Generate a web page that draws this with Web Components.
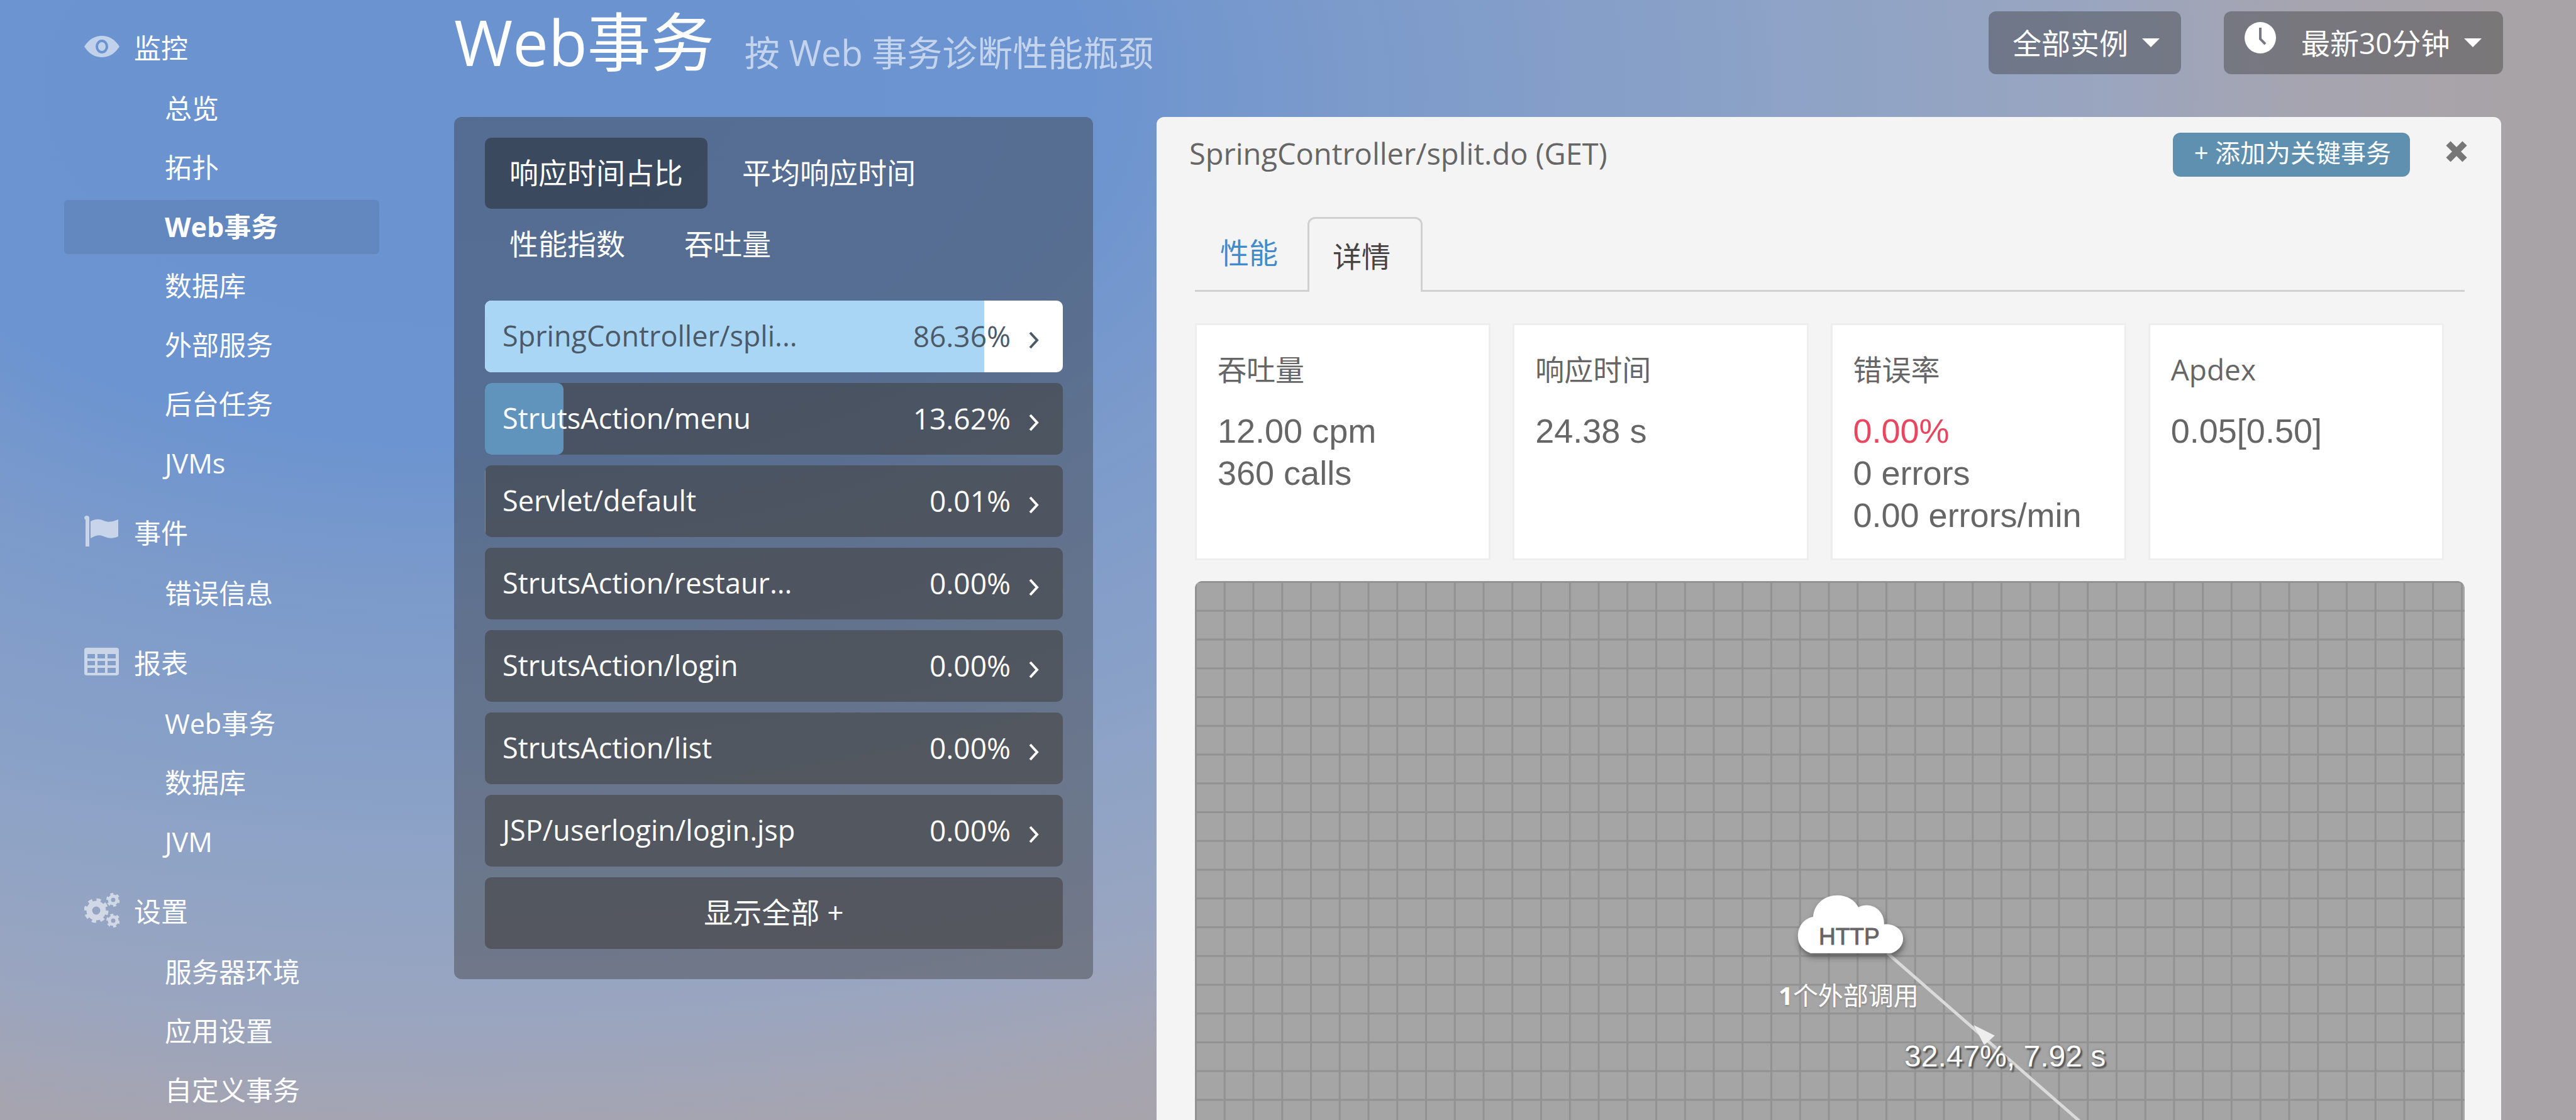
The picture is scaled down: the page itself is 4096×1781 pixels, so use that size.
<!DOCTYPE html>
<html lang="zh-CN">
<head>
<meta charset="utf-8">
<title>Web事务</title>
<style>
  html, body { margin: 0; height: 100%; }
  body {
    overflow: hidden;
    font-family: "Open Sans", "Noto Sans CJK SC", sans-serif;
    font-size: 46px;
    color: #fff;
  }
</style>
</head>
<body>
<apm-app>
  <apm-sidebar slot="side">
    <apm-nav-group icon="eye" label="监控">
      <apm-nav-item>总览</apm-nav-item>
      <apm-nav-item>拓扑</apm-nav-item>
      <apm-nav-item active>Web事务</apm-nav-item>
      <apm-nav-item>数据库</apm-nav-item>
      <apm-nav-item>外部服务</apm-nav-item>
      <apm-nav-item>后台任务</apm-nav-item>
      <apm-nav-item>JVMs</apm-nav-item>
    </apm-nav-group>
    <apm-nav-group icon="flag" label="事件">
      <apm-nav-item>错误信息</apm-nav-item>
    </apm-nav-group>
    <apm-nav-group icon="table" label="报表">
      <apm-nav-item>Web事务</apm-nav-item>
      <apm-nav-item>数据库</apm-nav-item>
      <apm-nav-item>JVM</apm-nav-item>
    </apm-nav-group>
    <apm-nav-group icon="cogs" label="设置">
      <apm-nav-item>服务器环境</apm-nav-item>
      <apm-nav-item>应用设置</apm-nav-item>
      <apm-nav-item>自定义事务</apm-nav-item>
    </apm-nav-group>
  </apm-sidebar>

  <apm-page-header slot="header">
    <span slot="title">Web事务</span>
    <span slot="subtitle">按 Web 事务诊断性能瓶颈</span>
    <apm-dropdown value="全部实例" label="实例"></apm-dropdown>
    <apm-dropdown value="最新30分钟" label="时间范围" clock></apm-dropdown>
  </apm-page-header>

  <apm-transaction-list>
    <apm-metric-tab slot="tabs" active>响应时间占比</apm-metric-tab>
    <apm-metric-tab slot="tabs">平均响应时间</apm-metric-tab>
    <apm-metric-tab slot="tabs">性能指数</apm-metric-tab>
    <apm-metric-tab slot="tabs">吞吐量</apm-metric-tab>
    <apm-transaction share="86.36" active>SpringController/spli...</apm-transaction>
    <apm-transaction share="13.62">StrutsAction/menu</apm-transaction>
    <apm-transaction share="0.01">Servlet/default</apm-transaction>
    <apm-transaction share="0.00">StrutsAction/restaur...</apm-transaction>
    <apm-transaction share="0.00">StrutsAction/login</apm-transaction>
    <apm-transaction share="0.00">StrutsAction/list</apm-transaction>
    <apm-transaction share="0.00">JSP/userlogin/login.jsp</apm-transaction>
  </apm-transaction-list>

  <apm-detail>
    <span slot="name">SpringController/split.do (GET)</span>
    <apm-stat slot="stats" label="吞吐量"><div>12.00 cpm</div><div>360 calls</div></apm-stat>
    <apm-stat slot="stats" label="响应时间"><div>24.38 s</div></apm-stat>
    <apm-stat slot="stats" label="错误率"><div style="color:#e8475f">0.00%</div><div>0 errors</div><div>0.00 errors/min</div></apm-stat>
    <apm-stat slot="stats" label="Apdex"><div>0.05[0.50]</div></apm-stat>
    <apm-topology></apm-topology>
  </apm-detail>
</apm-app>

<script>
const ICONS = {
  eye: `<path fill-rule="evenodd" d="M0 17C8 5 17 0 28 0S48 5 56 17C48 29 39 34 28 34S8 29 0 17ZM28 6a10 11 0 1 0 0 22a10 11 0 1 0 0-22ZM28 10a6 7 0 1 1 0 14a6 7 0 1 1 0-14Z" transform="translate(0 11)"/>`,
  flag: `<path d="M0 7a4 4 0 0 1 8 0V52H2V10ZM10 12C18 8 24 8 31 11S45 13 54 9V36C45 40 38 39 31 36S18 34 10 39Z"/>`,
  table: `<path fill-rule="evenodd" d="M4 6H51a4 4 0 0 1 4 4V46a4 4 0 0 1-4 4H4a4 4 0 0 1-4-4V10A4 4 0 0 1 4 6ZM5 16H17V23H5ZM21 16H33V23H21ZM37 16H50V23H37ZM5 27H17V34H5ZM21 27H33V34H21ZM37 27H50V34H37ZM5 38H17V46H5ZM21 38H33V46H21ZM37 38H50V46H37Z"/>`,
  cogs: `<g fill="none" stroke="currentColor"><circle cx="19" cy="29" r="11" stroke-width="9"/><circle cx="19" cy="29" r="17" stroke-width="5" stroke-dasharray="6.7 6.65"/><circle cx="46" cy="12" r="6" stroke-width="5"/><circle cx="46" cy="12" r="9" stroke-width="4" stroke-dasharray="4.7 4.72"/><circle cx="46" cy="45" r="6" stroke-width="5"/><circle cx="46" cy="45" r="9" stroke-width="4" stroke-dasharray="4.7 4.72"/></g>`
};

function define(name, render) {
  customElements.define(name, class extends HTMLElement {
    constructor() {
      super();
      this.attachShadow({ mode: "open" });
    }
    connectedCallback() {
      this.shadowRoot.innerHTML = render(this);
    }
  });
}

define("apm-app", () => `
<style>
  :host {
    display: grid;
    grid-template-columns: 722px minmax(0, 1fr);
    height: 100vh;
    overflow: hidden;
    background: radial-gradient(ellipse 75% 98% at 18% 8%, #6b93d0 0%, #6c94d0 32%, #7b9acb 45%, #8ea3c6 70%, #9aa5bf 85%, #a5a4b0 95%, #a8a3a7 105%);
  }
  main { display: flex; flex-direction: column; min-height: 0; padding-right: 119px; }
  .body { flex: 1; min-height: 0; display: flex; align-items: flex-start; gap: 101px; }
</style>
<slot name="side"></slot>
<main><slot name="header"></slot><div class="body"><slot></slot></div></main>`);

define("apm-sidebar", () => `
<style>
  :host { display: block; padding: 31px 119px 0 102px; }
  nav { display: flex; flex-direction: column; gap: 22px; }
</style>
<nav><slot></slot></nav>`);

define("apm-nav-group", el => `
<style>
  :host { display: block; font-size: 43px; }
  h2 {
    display: flex; align-items: center; gap: 23px;
    height: 86px; margin: 0 0 13px; padding-left: 32px;
    font-size: inherit; font-weight: 400;
  }
  svg { width: 56px; height: 56px; fill: currentColor; opacity: .58; }
  div { display: flex; flex-direction: column; gap: 8px; }
</style>
<h2><svg viewBox="0 0 56 56" aria-hidden="true">${ICONS[el.getAttribute("icon")]}</svg>${el.getAttribute("label")}</h2>
<div><slot></slot></div>`);

define("apm-nav-item", () => `
<style>
  :host { display: block; }
  a {
    display: block; height: 86px; line-height: 86px; padding-left: 160px;
    color: inherit; text-decoration: none; border-radius: 6px;
  }
  :host([active]) a { background: rgba(0, 0, 0, .08); font-weight: 700; }
</style>
<a href="#"><slot></slot></a>`);

define("apm-page-header", () => `
<style>
  :host { display: flex; align-items: flex-start; height: 168px; padding-top: 18px; }
  h1 { flex: 1; display: flex; align-items: baseline; gap: 48px; margin: 0; font-size: 101px; font-weight: 400; line-height: 96px; }
  small { font-size: 56px; color: rgba(255, 255, 255, .6); }
  .tools { display: flex; gap: 68px; margin-right: -3px; }
</style>
<h1><slot name="title"></slot><small><slot name="subtitle"></slot></small></h1>
<div class="tools"><slot></slot></div>`);

define("apm-dropdown", el => `
<style>
  :host { display: block; }
  label {
    display: flex; align-items: center; height: 100px; padding: 0 34px 0 38px;
    border-radius: 12px; background: rgba(53, 53, 53, .4);
  }
  :host([clock]) label { padding-left: 33px; }
  select {
    appearance: none; border: 0; margin: 0; padding: 0; background: none;
    color: inherit; font: inherit; line-height: 100px; height: 100px; outline: 0;
  }
  .clock { width: 50px; height: 50px; margin: 0 40px 16px 0; }
  .caret { width: 28px; height: 14px; margin-left: 22px; fill: currentColor; }
</style>
<label>
  ${el.hasAttribute("clock") ? `<svg class="clock" viewBox="0 0 50 50" aria-hidden="true"><circle cx="25" cy="25" r="25" fill="#fff"/><path d="M25 9V27L33 35" fill="none" stroke="#777881" stroke-width="4"/></svg>` : ""}
  <select aria-label="${el.getAttribute("label")}"><option>${el.getAttribute("value")}</option></select>
  <svg class="caret" viewBox="0 0 30 15" aria-hidden="true"><path d="M0 0H30L15 15Z"/></svg>
</label>`);

define("apm-transaction-list", () => `
<style>
  :host {
    display: block; box-sizing: border-box; flex: 0 0 1016px;
    padding: 33px 48px 48px 49px;
    border-radius: 12px; background: rgba(53, 53, 53, .4);
  }
  .tabs { display: flex; flex-wrap: wrap; gap: 0 16px; margin-bottom: 33px; }
  .rows { display: flex; flex-direction: column; gap: 17px; }
  button {
    height: 114px; padding: 0 0 8px; border: 0; border-radius: 10px; background: rgba(64, 62, 60, .55);
    color: inherit; font: inherit;
  }
</style>
<div class="tabs"><slot name="tabs"></slot></div>
<div class="rows"><slot></slot><button type="button">显示全部 +</button></div>`);

define("apm-metric-tab", () => `
<style>
  :host { display: block; }
  button {
    height: 113px; padding: 0 39px 8px; border: 0; border-radius: 10px;
    background: none; color: inherit; font: inherit;
  }
  :host([active]) button { background: rgba(24, 24, 24, .42); }
</style>
<button type="button"><slot></slot></button>`);

define("apm-transaction", el => `
<style>
  :host { display: block; }
  a {
    display: grid; grid-template-columns: 1fr auto auto; align-items: center;
    height: 114px; border-radius: 10px; overflow: hidden;
    background: rgba(64, 62, 60, .55); color: inherit; text-decoration: none;
  }
  .bar { grid-area: 1 / 1 / 2 / 4; height: 114px; width: ${el.getAttribute("share")}%; background: #6094bc; border-radius: 10px; }
  .name { grid-area: 1 / 1; padding: 0 0 3px 28px; font-size: 45px; }
  .share { grid-area: 1 / 2; padding-bottom: 3px; }
  svg { grid-area: 1 / 3; width: 18px; height: 28px; margin: 12px 37px 0 28px; fill: none; stroke: currentColor; stroke-width: 4; }
  :host([active]) a { background: #fff; color: #4c5a68; }
  :host([active]) .bar { background: #aad6f5; border-radius: 0; }
</style>
<a href="#">
  <span class="bar"></span>
  <span class="name"><slot></slot></span>
  <span class="share">${el.getAttribute("share")}%</span>
  <svg viewBox="0 0 18 28" aria-hidden="true"><path d="M3 2L14 14L3 26"/></svg>
</a>`);

define("apm-detail", () => `
<style>
  :host {
    display: flex; flex-direction: column; flex: 1; align-self: stretch; min-width: 0; box-sizing: border-box;
    padding: 25px 58px 0 61px; border-radius: 12px 12px 0 0;
    background: #f4f4f4; color: #666;
  }
  header { display: flex; align-items: center; height: 70px; margin: 0 -4px 64px -9px; }
  h2 { flex: 1; margin: 0; padding-bottom: 4px; font-size: 47px; font-weight: 400; line-height: 66px; }
  .key {
    height: 70px; padding: 0 30px 6px 34px; border: 0; border-radius: 12px;
    background: #6090b0; color: #fff; font: inherit; font-size: 40px; line-height: 60px;
  }
  .close { width: 34px; height: 70px; margin-left: 57px; padding: 0 0 10px; border: 0; background: none; color: #777; }
  .close svg { display: block; width: 34px; height: 34px; stroke: currentColor; stroke-width: 10; }
  .tabs { display: flex; height: 119px; box-sizing: border-box; border-bottom: 3px solid #d0d0d0; }
  .tabs a {
    box-sizing: border-box; height: 119px; line-height: 107px; padding: 0 44px 0 37px;
    border: 3px solid transparent; border-bottom: 0; border-radius: 12px 12px 0 0;
    color: #428bca; text-decoration: none;
  }
  .tabs a.on { border-color: #d0d0d0; background: #f4f4f4; color: #444; line-height: 119px; padding-right: 48px; }
  .stats { display: grid; grid-template-columns: repeat(4, minmax(0, 1fr)); gap: 35px; margin: 50px 33px 33px 0; }
</style>
<header>
  <h2><slot name="name"></slot></h2>
  <button class="key" type="button">+ 添加为关键事务</button>
  <button class="close" type="button" aria-label="关闭"><svg viewBox="0 0 34 34"><path d="M4 4L30 30M30 4L4 30"/></svg></button>
</header>
<nav class="tabs"><a href="#">性能</a><a class="on" href="#">详情</a></nav>
<div class="stats"><slot name="stats"></slot></div>
<slot></slot>`);

define("apm-stat", el => `
<style>
  :host {
    display: block; box-sizing: border-box; min-height: 377px; padding: 37px 0 35px 33px;
    border: 3px solid #eee; background: #fff;
  }
  h3 { margin: 0 0 32px; font-size: 46px; font-weight: 400; line-height: 66px; }
  .values { font-family: "Liberation Sans", Arial, sans-serif; font-size: 54px; line-height: 67px; }
</style>
<h3>${el.getAttribute("label")}</h3>
<div class="values"><slot></slot></div>`);

define("apm-topology", () => `
<style>
  :host {
    display: block; position: relative; flex: 1; min-height: 0; overflow: hidden;
    border-radius: 12px 12px 0 0; background: #a5a5a5; color: #fff;
  }
  .map { display: block; width: 100%; }
  span { position: absolute; white-space: nowrap; }
  .http { left: 992px; top: 546px; font: 37px/40px "Liberation Sans", Arial, sans-serif; color: #666; -webkit-text-stroke: 1px #666; }
  .calls { left: 928px; top: 634px; font-size: 40px; line-height: 50px; text-shadow: 0 2px 3px #888; }
  .edge { left: 1128px; top: 726px; font: 48px/60px "Liberation Sans", Arial, sans-serif; text-shadow: 3px 3px 2px #555, 0 0 4px #777; }
</style>
<svg class="map" viewBox="0 0 662 300" aria-hidden="true">
  <defs>
    <pattern id="grid" width="15" height="15" patternUnits="userSpaceOnUse">
      <path d="M0 .5H15M.5 0V15" fill="none" stroke="#929292"/>
    </pattern>
    <filter id="shade" x="-20%" y="-20%" width="150%" height="160%"><feDropShadow dx="0.5" dy="2" stdDeviation="1.6" flood-color="#333" flood-opacity=".6"/></filter>
  </defs>
  <rect width="662" height="300" fill="url(#grid)"/>
  <path d="M361 194L480 298" stroke="#dadada" stroke-width="1.6"/>
  <path d="M406 231.500L417 237L411.500 242Z" fill="#eee"/>
  <path filter="url(#shade)" fill="#fff" d="M321 194C317 192.500 314.400 189.500 314.400 185C314.400 180 317.500 176 322.300 175C323 168 328.500 163.900 335 163.900C340 163.900 344 166.500 345.900 170.100C352 167 359.500 171 359.300 179C365 178.500 369.200 182 369.200 186.500C369.200 190 366.500 193 363 194Z"/>
</svg>
<span class="http">HTTP</span>
<span class="calls"><b>1</b>个外部调用</span>
<span class="edge">32.47%, 7.92 s</span>`);
</script>
</body>
</html>
